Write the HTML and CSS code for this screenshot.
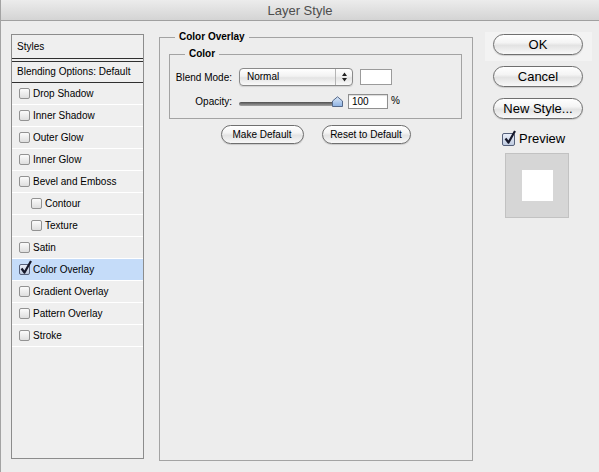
FILE: index.html
```html
<!DOCTYPE html>
<html lang="en">
<head>
  <meta charset="UTF-8" />
  <title>Layer Style</title>
  <link rel="stylesheet" href="styles.css">
</head>
<body>
  <div class="titlebar">Layer Style</div>
  <div class="content">
    <div class="styles-list">
      <div class="list-head">Styles</div>
      <div class="double-rule"></div>
      <div class="list-blend">Blending Options: Default</div>
      <div class="list-item"><span class="check"></span>Drop Shadow</div>
      <div class="list-item"><span class="check"></span>Inner Shadow</div>
      <div class="list-item"><span class="check"></span>Outer Glow</div>
      <div class="list-item"><span class="check"></span>Inner Glow</div>
      <div class="list-item"><span class="check"></span>Bevel and Emboss</div>
      <div class="list-item sub"><span class="check"></span>Contour</div>
      <div class="list-item sub"><span class="check"></span>Texture</div>
      <div class="list-item"><span class="check"></span>Satin</div>
      <div class="list-item active">
        <span class="check on">
          <svg class="tick" viewBox="0 0 14 15"><path d="M2.5 8.5 L5.5 12.5 L12 1"/></svg>
        </span>Color Overlay
      </div>
      <div class="list-item"><span class="check"></span>Gradient Overlay</div>
      <div class="list-item"><span class="check"></span>Pattern Overlay</div>
      <div class="list-item"><span class="check"></span>Stroke</div>
    </div>

    <fieldset class="group outer">
      <legend>Color Overlay</legend>
      <fieldset class="group inner">
        <legend>Color</legend>
        <div class="field-row">
          <label>Blend Mode:</label>
          <div class="popup">
            <span class="popup-value">Normal</span>
            <span class="popup-arrows">
              <svg width="5" height="10" viewBox="0 0 5 10"><path d="M0 4 L2.5 0.5 L5 4Z M0 6 L2.5 9.5 L5 6Z"/></svg>
            </span>
          </div>
          <div class="swatch"></div>
        </div>
        <div class="field-row">
          <label>Opacity:</label>
          <div class="slider">
            <div class="track"></div>
            <svg class="thumb" width="11" height="11" viewBox="0 0 11 11">
              <defs>
                <linearGradient id="thumbfill" x1="0" y1="0" x2="0" y2="1">
                  <stop offset="0" stop-color="#dbe8f8"/>
                  <stop offset="1" stop-color="#8cb1e2"/>
                </linearGradient>
              </defs>
              <path d="M0.5 10.5 V5 L5.5 0.8 L10.5 5 V10.5 Z" fill="url(#thumbfill)" stroke="#55698a"/>
            </svg>
          </div>
          <input class="num" type="text" value="100">
          <span class="unit">%</span>
        </div>
      </fieldset>
      <div class="default-btns">
        <button class="btn small make">Make Default</button>
        <button class="btn small reset">Reset to Default</button>
      </div>
    </fieldset>

    <div class="side">
      <div class="default-area"><button class="btn big">OK</button></div>
      <button class="btn big">Cancel</button>
      <button class="btn big">New Style...</button>
      <label class="preview-check">
        <span class="check big-check on">
          <svg class="tick" viewBox="0 0 14 15"><path d="M2.5 8.5 L5.5 12.5 L12 1"/></svg>
        </span>Preview
      </label>
      <div class="preview-box"><div class="preview-swatch"></div></div>
    </div>
  </div>
</body>
</html>
```

FILE: styles.css
```css
body {
  margin: 0;
  width: 598px;
  height: 472px;
  overflow: hidden;
  border-left: 1px solid #a3a3a3;
  background: #ededed;
  font-family: 'Liberation Sans', Arial, sans-serif;
  font-size: 10px;
  color: #000;
}
.titlebar {
  height: 20px;
  line-height: 21px;
  border-bottom: 1px solid #a0a0a0;
  background: linear-gradient(#ececec, #d4d4d4);
  text-align: center;
  font-size: 13px;
  color: #4d4d4d;
}
.content {
  display: flex;
  align-items: flex-start;
  padding: 13px 0 0 10px;
}

/* left list */
.styles-list {
  width: 133px;
  height: 425px;
  box-sizing: border-box;
  border: 1px solid #8c8c8c;
  background: #efefef;
}
.list-head {
  height: 23px;
  line-height: 24px;
  padding-left: 5px;
}
.double-rule {
  height: 2px;
  border-top: 1px solid #2f2f2f;
  border-bottom: 1px solid #2f2f2f;
}
.list-blend {
  height: 20px;
  line-height: 20px;
  padding-left: 5px;
  border-bottom: 1px solid #2f2f2f;
}
.list-item {
  display: flex;
  align-items: center;
  gap: 3px;
  height: 21px;
  padding-left: 7px;
  border-bottom: 1px solid #fff;
}
.list-item.sub {
  padding-left: 19px;
}
.list-item.active {
  background: #c5dcf9;
}
.check {
  position: relative;
  flex: none;
  width: 11px;
  height: 11px;
  box-sizing: border-box;
  border: 1px solid #929292;
  border-radius: 2px;
  background: linear-gradient(#fbfbfb, #dedede);
}
.check.on {
  border-color: #55607a;
  background: linear-gradient(#e9eef8, #bfcbe0);
}
.tick {
  position: absolute;
  left: -1px;
  top: -5px;
  width: 14px;
  height: 15px;
  overflow: visible;
}
.tick path {
  fill: none;
  stroke: #16182a;
  stroke-width: 2.2;
  stroke-linejoin: round;
}

/* middle groups */
.group {
  margin: 0;
  border: 1px solid #a3a3a3;
  min-width: 0;
}
.group legend {
  padding: 0 4px;
  line-height: 12px;
  font-weight: bold;
}
.outer {
  margin: -3px 0 0 15px;
  width: 314px;
  height: 430px;
  box-sizing: border-box;
  padding: 5px 10px 0 9px;
}
.outer > legend {
  margin-left: 6px;
}
.inner {
  padding: 0 0 9px 0;
}
.inner > legend {
  margin-left: 15px;
}
.field-row {
  display: flex;
  align-items: center;
  margin-top: 8px;
}
.field-row label {
  width: 62px;
  margin-right: 7px;
  text-align: right;
}
.popup {
  display: flex;
  width: 114px;
  height: 18px;
  box-sizing: border-box;
  border: 1px solid #8a8a8a;
  border-radius: 4px;
  background: linear-gradient(#ffffff, #f2f2f2 45%, #e3e3e3 55%, #fafafa);
  box-shadow: 0 1px 1px rgba(0, 0, 0, 0.12);
}
.popup-value {
  flex: 1;
  padding-left: 7px;
  line-height: 16px;
}
.popup-arrows {
  display: flex;
  align-items: center;
  justify-content: center;
  width: 16px;
  border-left: 1px solid #b5b5b5;
}
.popup-arrows path {
  fill: #222;
}
.swatch {
  width: 32px;
  height: 16px;
  box-sizing: border-box;
  margin-left: 7px;
  border: 1px solid #9b9b9b;
  background: #fff;
}
.slider {
  position: relative;
  width: 104px;
  height: 11px;
}
.track {
  width: 99px;
  height: 4px;
  margin-top: 6px;
  border-radius: 2px;
  background: linear-gradient(#4f4f4f, #a5a5a5);
}
.thumb {
  position: absolute;
  right: 0;
  top: 0;
}
.num {
  width: 40px;
  height: 15px;
  box-sizing: border-box;
  margin: 0 0 0 5px;
  padding: 0 3px;
  border: 1px solid #8f8f8f;
  box-shadow: inset 0 1px 1px rgba(0, 0, 0, 0.15);
  font-family: inherit;
  font-size: 10px;
  color: #000;
  background: #fff;
}
.unit {
  margin-left: 3px;
  align-self: flex-start;
  margin-top: 1px;
}
.default-btns {
  display: flex;
  justify-content: center;
  gap: 18px;
  margin-top: 6px;
}

/* buttons */
.btn {
  padding: 0;
  border: 1px solid #6f6f6f;
  border-radius: 11px;
  background: linear-gradient(#ffffff, #f4f4f4 40%, #e3e3e3 55%, #f8f8f8);
  box-shadow: 0 1px 1px rgba(0, 0, 0, 0.15);
  font-family: inherit;
  color: #000;
}
.btn.small {
  height: 19px;
  font-size: 10px;
}
.btn.make {
  width: 83px;
}
.btn.reset {
  width: 89px;
}
.btn.big {
  width: 90px;
  height: 21px;
  font-size: 13px;
}

/* right column */
.side {
  display: flex;
  flex-direction: column;
  align-items: flex-start;
  margin-left: 12px;
  padding-left: 8px;
}
.side > .btn {
  margin-top: 11px;
}
.default-area {
  margin: -2px -9px -6px -8px;
  padding: 2px 9px 6px 8px;
  background: #f3f3f3;
}
.preview-check {
  display: flex;
  align-items: center;
  gap: 4px;
  margin: 13px 0 0 9px;
  font-size: 13px;
  line-height: 14px;
}
.big-check {
  width: 13px;
  height: 13px;
}
.big-check .tick {
  left: 0;
  top: -4px;
}
.preview-box {
  display: flex;
  align-items: center;
  justify-content: center;
  width: 64px;
  height: 65px;
  box-sizing: border-box;
  margin: 7px 0 0 12px;
  border: 1px solid #c2c2c2;
  background: #d6d6d6;
}
.preview-swatch {
  width: 31px;
  height: 31px;
  background: #fff;
}
```
